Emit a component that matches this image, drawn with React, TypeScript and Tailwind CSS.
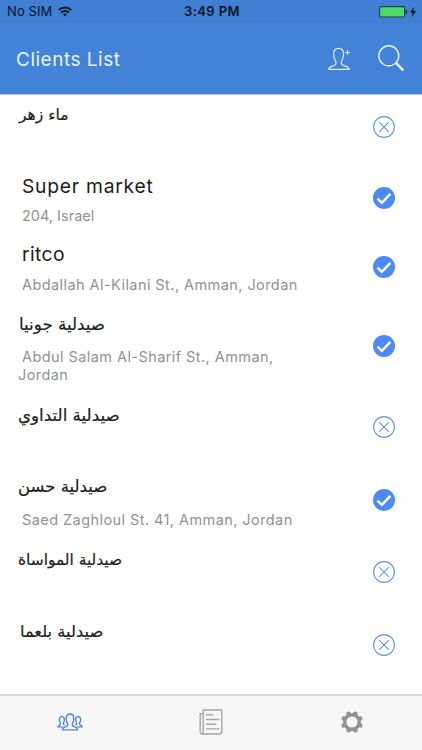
import React from 'react';

const clients = [
  { name: 'ماء زهر', nameClass: 'pl-[19px] text-[15.5px]', arabic: true, address: '', checked: false, height: 'h-[72px]' },
  { name: 'Super market', nameClass: 'pl-[22px] tracking-[0.75px]', address: '204, Israel', addressClass: 'pt-[9px]', checked: true, height: 'h-[70px]' },
  { name: 'ritco', nameClass: 'pl-[22px] -mt-[2px] tracking-[0.4px]', address: 'Abdallah Al-Kilani St., Amman, Jordan', addressClass: 'pt-[10px] tracking-[0.43px]', checked: true, height: 'h-[67px]' },
  { name: 'صيدلية جونيا', nameClass: 'pl-[19px] text-[16.7px]', arabic: true, address: 'Abdul Salam Al-Sharif St., Amman,', addressLine2: 'Jordan', addressClass: 'pt-[13px] tracking-[0.43px]', checked: true, height: 'h-[91px]' },
  { name: 'صيدلية التداوي', nameClass: 'pl-[18px] text-[16.7px]', arabic: true, address: '', checked: false, height: 'h-[72px]' },
  { name: 'صيدلية حسن', nameClass: 'pl-[18px] text-[16.5px]', arabic: true, address: 'Saed Zaghloul St. 41, Amman, Jordan', addressClass: 'pt-[13px] tracking-[0.43px]', checked: true, height: 'h-[73px]' },
  { name: 'صيدلية المواساة', nameClass: 'pl-[18px] text-[15.4px]', arabic: true, address: '', checked: false, height: 'h-[72px]' },
  { name: 'صيدلية بلعما', nameClass: 'pl-[20px] text-[16.3px]', arabic: true, address: '', checked: false, height: 'h-[73px]' },
];

const StatusBar = () => (
  <div className="flex h-[23px] items-center bg-[#407fd3] pl-[7px] pr-[5px] text-[13px] leading-none text-[#0a1526]">
    <div className="flex flex-1 items-center gap-[6px]">
      <span className="tracking-[0.1px]">No SIM</span>
      <svg width="14" height="11" viewBox="0 0 14 11" fill="none" stroke="currentColor" strokeWidth="1.9">
        <path d="M0.8 4.2C4.2 0.5 9.8 0.5 13.2 4.2" />
        <path d="M3.1 6.6C5.2 4.4 8.8 4.4 10.9 6.6" />
        <path d="M7 10.5L4.9 8.3C6.1 7.2 7.9 7.2 9.1 8.3Z" fill="currentColor" stroke="none" />
      </svg>
    </div>
    <span className="font-semibold tracking-[0.4px]">3:49 PM</span>
    <div className="flex flex-1 items-center justify-end">
      <svg width="38" height="12" viewBox="0 0 38 12">
        <rect x="0.6" y="0.6" width="25" height="10.4" rx="1.6" fill="#4cd964" stroke="#17445c" strokeWidth="1.1" />
        <path d="M26.6 3.8c1.8 0.5 1.8 3.7 0 4.2z" fill="#0a1526" />
        <path d="M35.2 0.8L31 6.4h2.6l-1 4.6 4.6-5.9h-2.9z" fill="#0a1526" />
      </svg>
    </div>
  </div>
);

const Header = () => (
  <div className="flex h-[71px] items-center bg-[#4283d8] pl-4 pr-[17px] shadow-[0_1px_1px_rgba(0,0,0,0.2)]">
    <h1 className="flex-1 pt-[3px] text-[19px] tracking-[0.5px] text-[#e6f2ff]">Clients List</h1>
    <svg className="mr-[27px]" width="23" height="24" viewBox="0 0 23 24" fill="none" stroke="#e3f0ff" strokeWidth="1.2">
      <path d="M8 14.8C6.3 12.6 5.6 10 5.6 6.8C5.6 3.2 7.4 1.4 10.6 1.4C13.8 1.4 15.6 3.2 15.6 6.8C15.6 10 14.9 12.6 13.2 14.8C12.9 17.6 14 18.5 17.2 19.2C19.8 19.8 20.8 20.7 21 22.4H0.8C1 20.7 2 19.8 4.4 19.2C7.4 18.5 8.4 17.6 8 14.8Z" />
      <path d="M17.2 5.5h4.6M19.5 3.2v4.6" />
    </svg>
    <svg width="27" height="27" viewBox="0 0 27 27" fill="none" stroke="#e9f4ff">
      <circle cx="10.8" cy="10.8" r="10" strokeWidth="1.4" />
      <path d="M17.9 17.9L25.3 25.3" strokeWidth="2.6" />
    </svg>
  </div>
);

const StatusIcon = ({ checked }: { checked: boolean }) =>
  checked ? (
    <svg width="22" height="22" viewBox="0 0 22 22" fill="none">
      <circle cx="11" cy="11" r="11" fill="#4d8af5" />
      <path d="M4.4 11.6L8.9 15.8L17.4 6.9" stroke="#fff" strokeWidth="2.5" />
    </svg>
  ) : (
    <svg width="22" height="22" viewBox="0 0 22 22" fill="none" stroke="#5f94f0">
      <circle cx="11" cy="11" r="10.4" strokeWidth="1.1" />
      <path d="M6.2 6.2L15.8 15.8M15.8 6.2L6.2 15.8" strokeWidth="1.1" />
    </svg>
  );

const TabBar = () => (
  <div className="grid h-[56px] grid-cols-3 items-center justify-items-center border-t-2 border-[#d8d8d8] bg-[#f7f7f7] pb-[3px]">
    <svg width="26" height="18" viewBox="0 0 26 18" fill="none" stroke="#4d82e0" strokeWidth="1.3">
      <path d="M10.8 11C9.7 9.6 9.2 7.8 9.2 5.4C9.2 2.5 10.6 1 13 1C15.4 1 16.8 2.5 16.8 5.4C16.8 7.8 16.3 9.6 15.2 11C15 12.8 15.8 13.4 17.6 13.9C19.8 14.4 20.4 15.2 20.5 16.8H5.5C5.6 15.2 6.2 14.4 8.4 13.9C10.2 13.4 11 12.8 10.8 11Z" />
      <path d="M5.8 13.8H0.9C1.1 12.3 3.6 12 3.6 10.3C2.7 9.3 2.4 8.1 2.4 6.6C2.4 4.8 3.3 3.7 4.9 3.7C6.5 3.7 7.4 4.8 7.4 6.6C7.4 8.1 7.1 9.3 6.2 10.3C6.2 11.3 6.8 11.7 7.7 12.1" />
      <path d="M20.2 13.8H25.1C24.9 12.3 22.4 12 22.4 10.3C23.3 9.3 23.6 8.1 23.6 6.6C23.6 4.8 22.7 3.7 21.1 3.7C19.5 3.7 18.6 4.8 18.6 6.6C18.6 8.1 18.9 9.3 19.8 10.3C19.8 11.3 19.2 11.7 18.3 12.1" />
    </svg>
    <svg width="24" height="26" viewBox="0 0 24 26" fill="none" stroke="#a5a5a5" strokeWidth="1.4">
      <path d="M4.2 4.6H1.2V22.8C1.2 24.3 2 25 3.3 25H20.5C22 25 22.8 24.2 22.8 22.8V1H4.2V22.5C4.2 24 3.8 25 2.9 25" />
      <path d="M7 5.8h7.2M7 10.5h13.5M7 15.2h10.4M7 19.9h13.5" />
    </svg>
    <svg width="22" height="22" viewBox="0 0 22 22" fill="none">
      <circle cx="11" cy="11" r="7.3" stroke="#929292" strokeWidth="3.4" />
      <g fill="#929292">
        {[22.5, 67.5, 112.5, 157.5, 202.5, 247.5, 292.5, 337.5].map((angle) => (
          <path key={angle} d="M8.3 3L9.4 0H12.6L13.7 3Z" transform={`rotate(${angle} 11 11)`} />
        ))}
      </g>
    </svg>
  </div>
);

const App = () => {
  return (
    <div className="flex h-[750px] w-[422px] flex-col overflow-hidden bg-white font-['Inter',sans-serif]">
      <div className="z-10">
        <StatusBar />
        <Header />
      </div>
      <div className="-mt-[3px] flex-1">
        {clients.map((client) => (
          <div key={client.name} className={`flex items-center pr-[27px] ${client.height}`}>
            <div className="h-full flex-1 pt-[11px]">
              <p
                dir={client.arabic ? 'rtl' : 'ltr'}
                className={`h-6 text-left leading-6 text-[#1c1c1c] ${client.arabic ? "pt-px font-['DejaVu_Sans',sans-serif] [-webkit-text-stroke:0.2px]" : 'text-[19.3px]'} ${client.nameClass}`}
              >
                {client.name}
              </p>
              {client.address && (
                <p className={`pl-[18px] text-[14.5px] leading-[17.5px] text-[#929292] ${client.addressClass}`}>
                  <span className="pl-1">{client.address}</span>
                  {client.addressLine2 && <span className="block">{client.addressLine2}</span>}
                </p>
              )}
            </div>
            <StatusIcon checked={client.checked} />
          </div>
        ))}
      </div>
      <TabBar />
    </div>
  );
};

export default App;
